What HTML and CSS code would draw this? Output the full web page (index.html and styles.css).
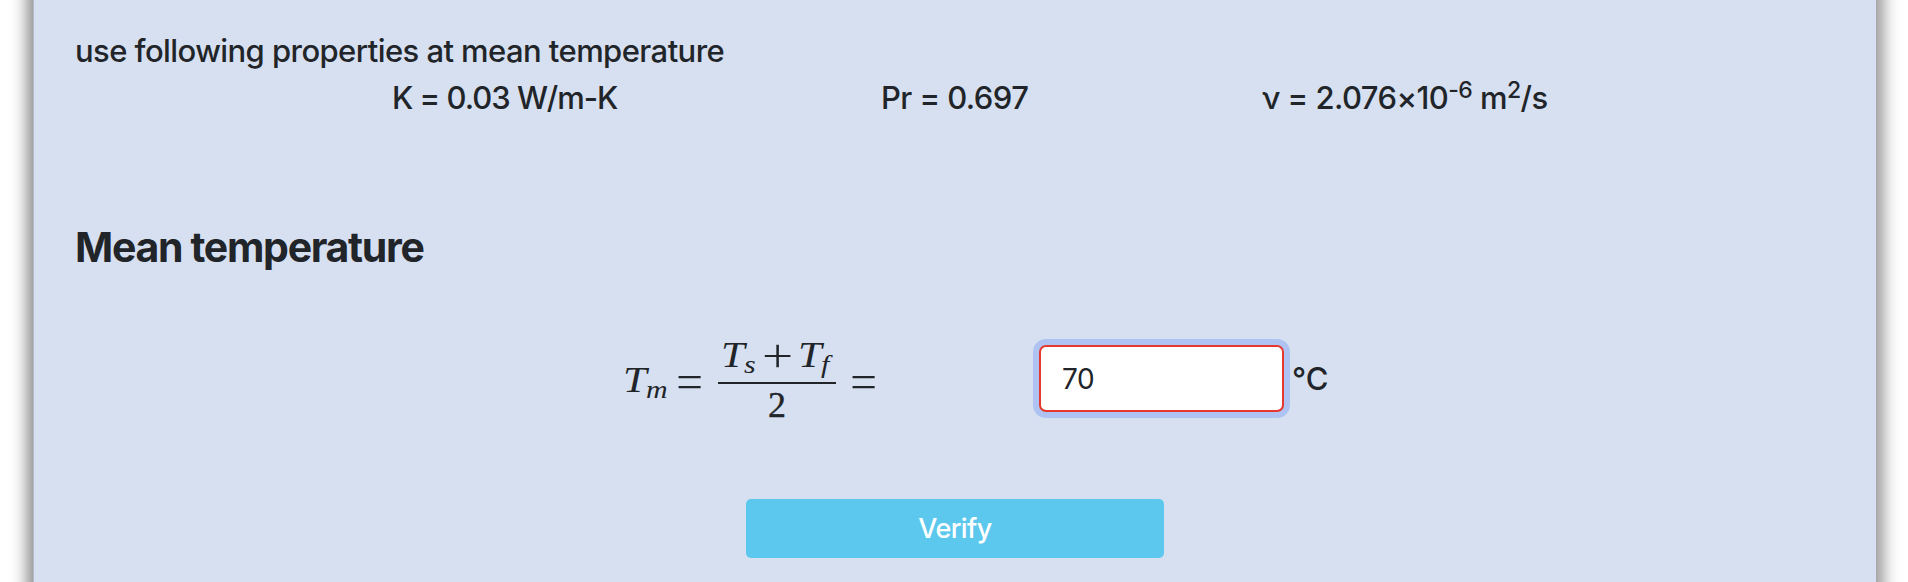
FILE: index.html
```
<!DOCTYPE html>
<html lang="en">
<head>
<meta charset="utf-8">
<title>Mean temperature</title>
<link rel="stylesheet" href="styles.css">
</head>
<body>
<main class="panel">
  <p class="intro">use following properties at mean temperature</p>
  <div class="properties">
    <span class="prop prop-k">K = 0.03 W/m-K</span>
    <span class="prop prop-pr">Pr = 0.697</span>
    <span class="prop prop-nu">ν = 2.076×10<sup>-6</sup> m<sup>2</sup>/s</span>
  </div>
  <h2 class="heading">Mean temperature</h2>
  <div class="question">
    <div class="formula">
      <span class="term term-m"><i class="var">T</i><i class="sub">m</i></span>
      <span class="op">=</span>
      <div class="fraction">
        <div class="numerator"><span class="term"><i class="var">T</i><i class="sub">s</i></span><span class="op plus">+</span><span class="term"><i class="var">T</i><i class="sub">f</i></span></div>
        <div class="denominator">2</div>
      </div>
      <span class="op">=</span>
    </div>
    <input class="answer" type="text" value="70" aria-label="Mean temperature">
    <span class="unit">°C</span>
  </div>
  <button class="verify" type="button">Verify</button>
</main>
</body>
</html>
```
FILE: styles.css
```
* { box-sizing: border-box; }
body {
  margin: 0;
  height: 582px;
  padding: 0 32px 0 33px;
  /* soft shade on both sides of the panel */
  background: linear-gradient(to right,
    #fff 6px, #fdfdfd 12px, #f2f2f2 18px, #dcdcdc 23px, #bdbdbd 28px, #a2a2a2 33px,
    #a8a8a8 1876px, #bdbdbd 1881px, #dcdcdc 1887px, #f2f2f2 1892px, #fdfdfd 1898px, #fff 1904px);
  color: #212529;
  font-family: Inter, "Liberation Sans", sans-serif;
}
.panel {
  height: 582px;
  padding: 28px 0 0 41px;
  display: flex;
  flex-direction: column;
  align-items: flex-start;
  background: #d7e0f0;
  border-left: 1px solid #b1b8c6;
}
.intro, .prop, .unit {
  font-size: 31px;
  font-weight: 500;
  line-height: 46px;
  white-space: nowrap;
}
.intro { margin: 0; }
.intro, .prop { letter-spacing: -0.57px; }
.properties { display: flex; height: 46px; margin-top: 1px; }
.prop-k { width: 489px; margin-left: 317px; letter-spacing: -1px; }
.prop-pr { width: 381px; }
.prop sup {
  font-size: 23px;
  line-height: 0;
  vertical-align: 11px;
}
.heading {
  margin: 96px 0 0;
  font-size: 41px;
  line-height: 60px;
  font-weight: 700;
  letter-spacing: -1.3px;
  white-space: nowrap;
}
.question { display: flex; height: 67px; margin-top: 68px; }
.formula {
  display: flex;
  width: 416px;
  margin-left: 548px;
  font-family: "Liberation Serif", serif;
  font-size: 36px;
  line-height: 40px;
}
.term { white-space: nowrap; }
.term-m { width: 54px; margin-top: 15px; }
.var {
  display: inline-block;
  transform: scaleX(1.18);
  transform-origin: left;
}
.sub {
  display: inline-block;
  margin-left: 3px;
  line-height: 30px;
  font-size: 26px;
  transform: translateY(6px) scaleX(1.15);
  transform-origin: left;
}
.op {
  display: flex;
  justify-content: center;
  font-family: Inter, sans-serif;
  font-weight: 200;
  font-size: 52px;
  line-height: 40px;
  width: 25px;
  margin-top: 14px;
  transform: scaleX(1.14);
}
.fraction { width: 118px; margin: -10px 15px 0 16px; }
.numerator {
  display: flex;
  height: 49px;
  padding-left: 3px;
  border-bottom: 2px solid #212529;
}
.plus { margin: -2px 8px 0 11px; }
.denominator {
  text-align: center;
  line-height: 43px;
  -webkit-text-stroke: 0.4px #212529;
}
.answer {
  width: 245px;
  height: 67px;
  padding: 0 21px;
  border: 2px solid #e5382f;
  border-radius: 7px;
  outline: 0;
  box-shadow: 0 0 0 6px #aec3f2;
  color: #212529;
  background: #fff;
  font: 400 28px Inter, sans-serif;
  letter-spacing: -0.5px;
}
.unit { margin-left: 8px; line-height: 67px; }
.verify {
  width: 418px;
  height: 59px;
  margin: 87px 0 0 671px;
  padding: 0;
  border: 0;
  border-radius: 5px;
  background: #5dc8ed;
  color: #fff;
  font: 500 27px Inter, sans-serif;
  letter-spacing: -0.6px;
}
```
